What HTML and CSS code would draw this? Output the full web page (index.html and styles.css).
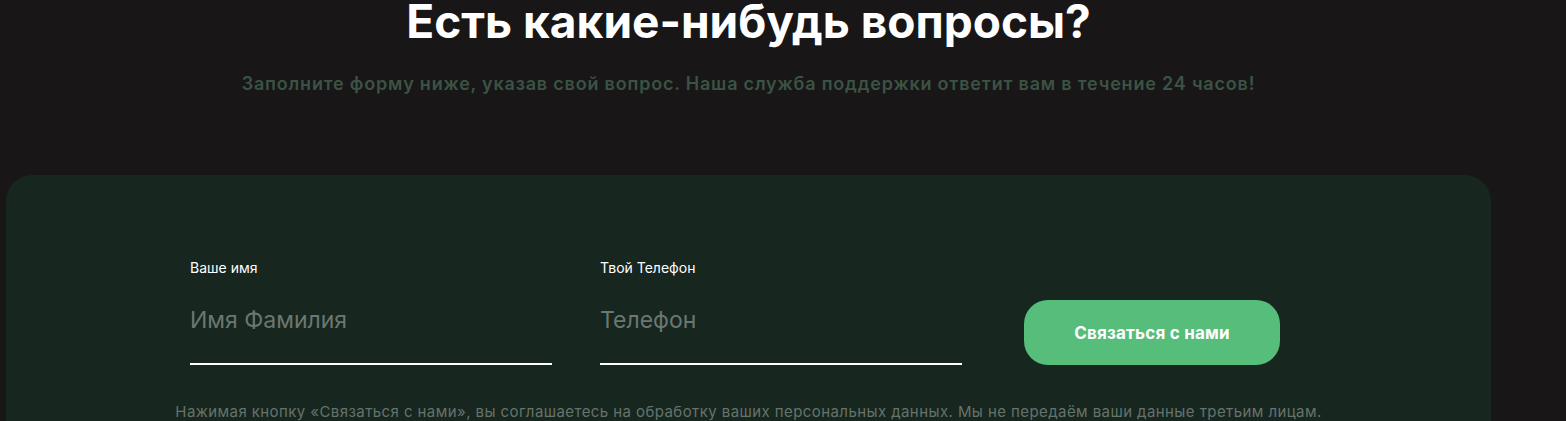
FILE: index.html
```html
<!DOCTYPE html>
<html lang="ru">
<head>
    <meta charset="UTF-8">
    <meta name="viewport" content="width=device-width, initial-scale=1.0">
    <title>Есть какие-нибудь вопросы?</title>
    <link rel="stylesheet" href="styles.css">
</head>
<body>
    <section class="questions">
        <div class="questions-head">
            <h1>Есть какие-нибудь вопросы?</h1>
            <p class="subtitle">Заполните форму ниже, указав свой вопрос. Наша служба поддержки ответит вам в течение 24 часов!</p>
        </div>

        <form class="contact-card" onsubmit="return false">
            <div class="form-row">
                <div class="field">
                    <label for="name">Ваше имя</label>
                    <input type="text" id="name" placeholder="Имя Фамилия">
                </div>
                <div class="field">
                    <label for="phone">Твой Телефон</label>
                    <input type="tel" id="phone" placeholder="Телефон">
                </div>
                <button type="submit" class="send-btn">Связаться с нами</button>
            </div>
            <p class="agreement">Нажимая кнопку «Связаться с нами», вы соглашаетесь на обработку ваших персональных данных. Мы не передаём ваши данные третьим лицам.</p>
        </form>
    </section>
</body>
</html>
```

FILE: styles.css
```css
body {
    margin: 0;
    background-color: #181617;
    font-family: 'Inter', 'Noto Sans', sans-serif;
    color: #ffffff;
    overflow: hidden;
}
.questions {
    width: 1485px;
    margin-left: 6px;
}
.questions-head {
    text-align: center;
}
h1 {
    margin: 0;
    font-size: 46px;
    line-height: 42px;
    font-weight: 700;
    color: #ffffff;
}
.subtitle {
    margin: 30px 0 0;
    font-size: 18px;
    line-height: 24px;
    font-weight: 600;
    letter-spacing: 0.8px;
    color: #3b5344;
}
.contact-card {
    margin-top: 79px;
    background-color: #17261f;
    border-radius: 26px;
    padding: 85px 0 40px;
}
.form-row {
    display: flex;
    align-items: flex-end;
    padding-left: 184px;
}
.field {
    width: 362px;
    margin-right: 48px;
}
.field + .field {
    margin-right: 62px;
}
label {
    display: block;
    font-size: 14px;
    line-height: 16px;
    color: #ffffff;
    margin-bottom: 30px;
}
.field input {
    display: block;
    width: 100%;
    box-sizing: border-box;
    padding: 0 0 29px;
    border: none;
    border-bottom: 2px solid #ffffff;
    background: transparent;
    font-family: inherit;
    font-size: 23px;
    line-height: 28px;
    color: #ffffff;
    outline: none;
}
.field input::placeholder {
    color: #6b776f;
}
.send-btn {
    width: 256px;
    height: 65px;
    border: none;
    border-radius: 24px;
    background-color: #56bd7b;
    color: #ffffff;
    font-family: inherit;
    font-size: 17px;
    font-weight: 700;
    letter-spacing: 0.2px;
    cursor: pointer;
}
.agreement {
    margin: 37px 0 0;
    text-align: center;
    font-size: 15px;
    line-height: 20px;
    letter-spacing: 0.42px;
    color: #66736b;
}
```
